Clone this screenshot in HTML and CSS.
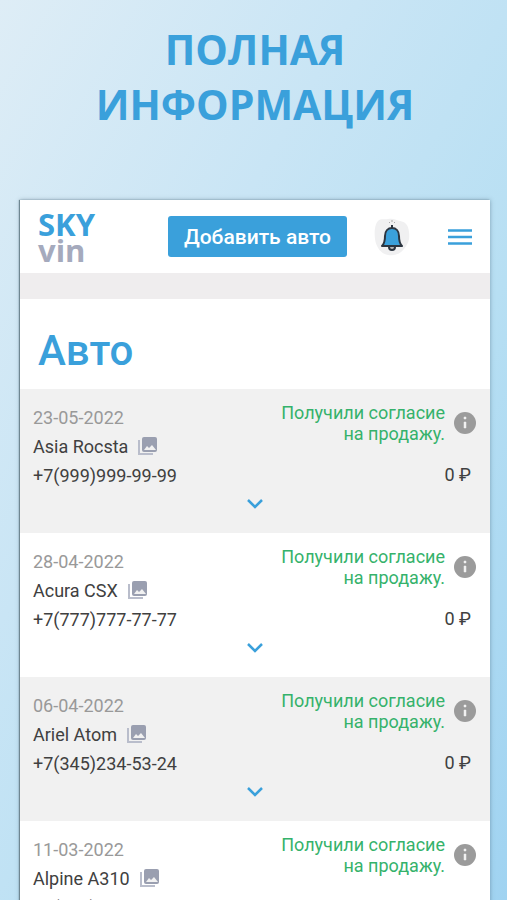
FILE: index.html
```html
<!DOCTYPE html>
<html lang="ru">
<head>
    <meta charset="UTF-8">
    <meta name="viewport" content="width=device-width, initial-scale=1.0">
    <title>SKY vin</title>
    <link rel="stylesheet" href="styles.css">
</head>
<body>
<svg class="sprite" aria-hidden="true">
    <symbol id="photos" viewBox="0 0 20 20">
        <path d="M1 3v14h14" fill="none" stroke="#b9bdcb" stroke-width="2"/>
        <rect x="4" y="0" width="15" height="15" rx="2" fill="#9a9fb0"/>
        <path d="M6 13l3-4 2 2 3-3 4 5z" fill="#f1f1f1"/>
    </symbol>
    <symbol id="info" viewBox="0 0 24 24">
        <circle cx="12" cy="12" r="11" fill="#9b9b9b"/>
        <path d="M11 6h2v2h-2zM11 11h2v6h-2z" fill="#f1f1f1" stroke="#f1f1f1" stroke-width=".5"/>
    </symbol>
    <symbol id="chevron" viewBox="0 0 16 10">
        <path d="M1 1l7 7 7-7" fill="none" stroke="#3aa0db" stroke-width="2.5"/>
    </symbol>
</svg>
<div class="promo">
    <h1 class="promo-title">ПОЛНАЯ<br>ИНФОРМАЦИЯ</h1>
    <div class="app">
        <header class="header">
            <a class="logo" href="#"><span class="logo-sky">SKY</span><span class="logo-vin">vin</span></a>
            <button class="add-btn" type="button">Добавить авто</button>
            <button class="icon-btn bell" type="button" aria-label="Уведомления">
                <svg width="36" height="40" viewBox="0 0 36 40">
                    <path d="M14 2c6-1 7 1 12 2s8 3 9 11-1 12-5 17-9 7-16 6S2 30 1 22 1 7 4 4s6-1 10-2z" fill="#f0f0f1"/>
                    <path d="M15 5l1 1M18 3v2M21 5l-1 1" stroke="#aaa" stroke-width="1"/>
                    <path d="M15 30a3 3 0 0 0 6 0" fill="#bbb" stroke="#2c3540" stroke-width="2"/>
                    <path d="M18 8v3M8 29c2-2 3-4 3-10 0-5 3-8 7-8s7 3 7 8c0 6 1 8 3 10z" fill="#3aa0db" stroke="#2c3540" stroke-width="2" stroke-linejoin="round"/>
                </svg>
            </button>
            <button class="icon-btn" type="button" aria-label="Меню">
                <svg width="24" height="18" viewBox="0 0 24 18">
                    <path d="M0 2.5h24M0 9h24M0 15.5h24" stroke="#3aa0db" stroke-width="2.5"/>
                </svg>
            </button>
        </header>
        <div class="band"></div>
        <h2 class="title">Авто</h2>
        <ul class="cars">
            <li class="car">
                <div class="car-info">
                    <time class="date">23-05-2022</time>
                    <span class="name">Asia Rocsta <svg class="photos"><use href="#photos"/></svg></span>
                    <span>+7(999)999-99-99</span>
                </div>
                <div class="car-state">
                    <div class="status">Получили согласие<br>на продажу.</div>
                    <svg class="info"><use href="#info"/></svg>
                    <div class="price">0 ₽</div>
                </div>
                <button class="more" type="button" aria-label="Подробнее"><svg class="chevron"><use href="#chevron"/></svg></button>
            </li>
            <li class="car">
                <div class="car-info">
                    <time class="date">28-04-2022</time>
                    <span class="name">Acura CSX <svg class="photos"><use href="#photos"/></svg></span>
                    <span>+7(777)777-77-77</span>
                </div>
                <div class="car-state">
                    <div class="status">Получили согласие<br>на продажу.</div>
                    <svg class="info"><use href="#info"/></svg>
                    <div class="price">0 ₽</div>
                </div>
                <button class="more" type="button" aria-label="Подробнее"><svg class="chevron"><use href="#chevron"/></svg></button>
            </li>
            <li class="car">
                <div class="car-info">
                    <time class="date">06-04-2022</time>
                    <span class="name">Ariel Atom <svg class="photos"><use href="#photos"/></svg></span>
                    <span>+7(345)234-53-24</span>
                </div>
                <div class="car-state">
                    <div class="status">Получили согласие<br>на продажу.</div>
                    <svg class="info"><use href="#info"/></svg>
                    <div class="price">0 ₽</div>
                </div>
                <button class="more" type="button" aria-label="Подробнее"><svg class="chevron"><use href="#chevron"/></svg></button>
            </li>
            <li class="car">
                <div class="car-info">
                    <time class="date">11-03-2022</time>
                    <span class="name">Alpine A310 <svg class="photos"><use href="#photos"/></svg></span>
                    <span>+7(999)999-99-99</span>
                </div>
                <div class="car-state">
                    <div class="status">Получили согласие<br>на продажу.</div>
                    <svg class="info"><use href="#info"/></svg>
                    <div class="price">0 ₽</div>
                </div>
                <button class="more" type="button" aria-label="Подробнее"><svg class="chevron"><use href="#chevron"/></svg></button>
            </li>
        </ul>
    </div>
</div>
</body>
</html>
```
FILE: styles.css
```css
* {
    box-sizing: border-box;
}

body {
    margin: 0;
    font-family: Roboto, Arial, sans-serif;
    font-size: 18px;
    color: #404040;
}

.sprite {
    display: none;
}

.promo {
    height: 100vh;
    overflow: hidden;
    padding: 22px 17px 0 20px;
    background: linear-gradient(120deg, #deedf6 0%, #c9e5f5 35%, #b7dff3 65%, #a0d3f1 100%);
}

.promo-title {
    margin: 0 0 67px;
    font-family: "Open Sans", sans-serif;
    font-size: 41px;
    font-weight: 700;
    line-height: 55px;
    text-align: center;
    color: #3aa0db;
}

.app {
    margin-top: 68px;
    background: #fff;
    box-shadow: -1px 0 1px #6f8792, 0 0 4px rgba(60, 90, 110, 0.5);
}

.header {
    display: flex;
    align-items: center;
    height: 73px;
    padding: 0 18px;
}

.logo {
    display: flex;
    flex-direction: column;
    font-family: "Open Sans", sans-serif;
    font-size: 31px;
    font-weight: 700;
    line-height: 26px;
    text-decoration: none;
}

.logo-sky {
    color: #3aa0db;
}

.logo-vin {
    color: #a5aabd;
}

.add-btn {
    height: 41px;
    margin-left: auto;
    padding: 0 16px;
    border: none;
    border-radius: 3px;
    background: #3aa0db;
    color: #fff;
    font-family: inherit;
    font-size: 21px;
    font-weight: 500;
}

.icon-btn {
    display: flex;
    padding: 0;
    border: none;
    background: none;
}

.bell {
    margin: 0 38px 0 27px;
}

.band {
    height: 26px;
    background: #efedee;
}

.title {
    margin: 0;
    padding: 27px 18px 13px;
    font-size: 42px;
    font-weight: 500;
    line-height: 50px;
    color: #3aa0db;
}

.cars {
    margin: 0;
    padding: 0;
    list-style: none;
}

.car {
    display: grid;
    grid-template-columns: 1fr auto;
    padding: 13px 13px 15px;
}

.car:nth-child(odd) {
    background: #f1f1f1;
}

.car-info {
    display: flex;
    flex-direction: column;
    padding-top: 1px;
    line-height: 29px;
}

.date {
    color: #999;
}

.name {
    display: flex;
    align-items: center;
    gap: 10px;
}

.photos {
    width: 20px;
    height: 20px;
}

.car-state {
    display: grid;
    grid-template-columns: auto 24px;
    column-gap: 8px;
    align-items: center;
    align-content: start;
}

.status {
    line-height: 21px;
    text-align: right;
    color: #35b26b;
}

.info {
    width: 24px;
    height: 24px;
}

.price {
    grid-column: 1 / 3;
    padding: 16px 6px 0 0;
    line-height: 29px;
    text-align: right;
}

.more {
    grid-column: 1 / 3;
    display: flex;
    justify-content: center;
    padding: 9px 0;
    border: none;
    background: none;
}

.chevron {
    width: 16px;
    height: 10px;
}
```
